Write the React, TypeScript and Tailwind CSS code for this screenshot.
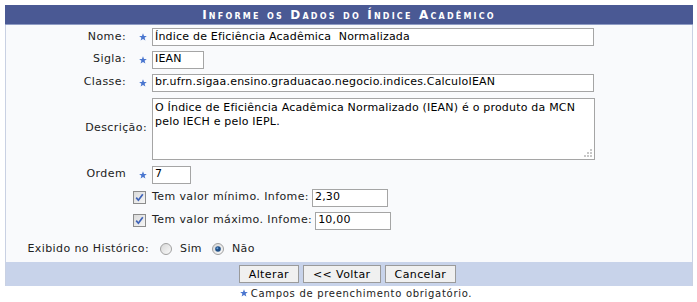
import React from "react";

function Star() {
  return (
    <svg width="8" height="8" viewBox="0 0 10 10" className="inline-block">
      <polygon
        points="5,0.3 6.3,3.6 9.8,3.7 7,5.9 8,9.5 5,7.4 2,9.5 3,5.9 0.2,3.7 3.7,3.6"
        fill="#4a76cf"
      />
    </svg>
  );
}

function Checkbox() {
  return (
    <svg width="13" height="13" viewBox="0 0 13 13" className="block">
      <defs>
        <linearGradient id="cb" x1="0" y1="0" x2="1" y2="1">
          <stop offset="0" stopColor="#d9d9d9" />
          <stop offset="1" stopColor="#f7f7f7" />
        </linearGradient>
      </defs>
      <rect x="0.5" y="0.5" width="12" height="12" fill="url(#cb)" stroke="#8c8c8c" />
      <path d="M3.2 6.6 L5.4 9.2 L9.8 3.2" stroke="#3f63b8" strokeWidth="1.7" fill="none" />
    </svg>
  );
}

function Radio({ on }: { on?: boolean }) {
  return (
    <svg width="12" height="12" viewBox="0 0 12 12" className="block">
      <defs>
        <linearGradient id="rb" x1="0" y1="0" x2="1" y2="1">
          <stop offset="0" stopColor="#d6d6d6" />
          <stop offset="1" stopColor="#fbfbfb" />
        </linearGradient>
      </defs>
      <circle cx="6" cy="6" r="5.5" fill="url(#rb)" stroke="#a0a0a0" />
      {on && <circle cx="6" cy="6" r="2.8" fill="#1f4f86" />}
      {on && <circle cx="5.4" cy="5.3" r="1" fill="#6fa3dd" />}
    </svg>
  );
}

const input =
  "h-[18px] bg-white border border-[#a5a5a5] px-[2px] flex items-center text-black whitespace-nowrap overflow-hidden tracking-[0.2px]";

const button =
  "h-[18px] px-[9px] bg-[#f0f0f0] border border-[#9a9a9a] text-black leading-none tracking-[0.4px]";

export default function App() {
  return (
    <div className="w-[697px] h-[302px] bg-white pt-[5px] text-[11px] tracking-[0.4px] text-[#222] font-['DejaVu_Sans',Verdana,sans-serif]">
      <div className="mx-[5px] w-[688px]">
        <div className="h-[20px] bg-[#4a5994] border-b border-[#8f9cc4] flex items-center justify-center text-white font-bold tracking-[2.2px] [font-variant:small-caps] text-[12px]">
          Informe os Dados do Índice Acadêmico
        </div>

        <div className="bg-[#f9fafc] border-x border-[#c9d1e3]">
          <div className="grid grid-cols-[120px_26px_1fr]">
            {/* Nome */}
            <div className="h-[23px] flex items-center justify-end pt-[1px]">Nome:</div>
            <div className="h-[23px] flex items-center justify-end pr-[5px]"><Star /></div>
            <div className="h-[23px] flex items-center pt-[1px]">
              <div className={`${input} w-[442px]`}>Índice de Eficiência Acadêmica&nbsp; Normalizada</div>
            </div>

            {/* Sigla */}
            <div className="h-[23px] flex items-center justify-end">Sigla:</div>
            <div className="h-[23px] flex items-center justify-end pr-[5px]"><Star /></div>
            <div className="h-[23px] flex items-center">
              <div className={`${input} w-[52px]`}>IEAN</div>
            </div>

            {/* Classe */}
            <div className="h-[23px] flex items-center justify-end">Classe:</div>
            <div className="h-[23px] flex items-center justify-end pr-[5px]"><Star /></div>
            <div className="h-[23px] flex items-center">
              <div className={`${input} w-[442px]`}>br.ufrn.sigaa.ensino.graduacao.negocio.indices.CalculoIEAN</div>
            </div>

            {/* Descrição */}
            <div className="col-span-2 h-[69px] flex items-center justify-end pr-[5px]">Descrição:</div>
            <div className="h-[69px] pt-[4px]">
              <div className="relative w-[443px] h-[62px] bg-white border border-[#a5a5a5] px-[2px] pt-[2px] leading-[14px] text-black tracking-[0.2px]">
                O Índice de Eficiência Acadêmica Normalizado (IEAN) é o produto da MCN
                <br />
                pelo IECH e pelo IEPL.
                <svg width="10" height="10" viewBox="0 0 10 10" className="absolute right-[1px] bottom-[1px]">
                  <rect x="7" y="1" width="2" height="2" fill="#c8c8c8" />
                  <rect x="4" y="4" width="2" height="2" fill="#c8c8c8" />
                  <rect x="7" y="4" width="2" height="2" fill="#c8c8c8" />
                  <rect x="1" y="7" width="2" height="2" fill="#c8c8c8" />
                  <rect x="4" y="7" width="2" height="2" fill="#c8c8c8" />
                  <rect x="7" y="7" width="2" height="2" fill="#c8c8c8" />
                </svg>
              </div>
            </div>

            {/* Ordem */}
            <div className="h-[23px] flex items-center justify-end">Ordem</div>
            <div className="h-[23px] flex items-center justify-end pr-[5px]"><Star /></div>
            <div className="h-[23px] flex items-center">
              <div className={`${input} w-[39px]`}>7</div>
            </div>

            {/* Mínimo */}
            <div className="col-span-2 h-[23px] flex items-center justify-end pr-[6px]"><Checkbox /></div>
            <div className="h-[23px] flex items-center gap-[3px]">
              <span>Tem valor mínimo. Infome:</span>
              <div className={`${input} w-[76px]`}>2,30</div>
            </div>

            {/* Máximo */}
            <div className="col-span-2 h-[23px] flex items-center justify-end pr-[6px]"><Checkbox /></div>
            <div className="h-[23px] flex items-center gap-[3px]">
              <span>Tem valor máximo. Infome:</span>
              <div className={`${input} w-[76px]`}>10,00</div>
            </div>

            {/* Exibido */}
            <div className="col-span-2 h-[30px] pt-[4px] flex items-center justify-end pr-[3px]">Exibido no Histórico:</div>
            <div className="h-[30px] pt-[4px] flex items-center pl-[8px]">
              <Radio />
              <span className="ml-[8px]">Sim</span>
              <span className="ml-[10px]"><Radio on /></span>
              <span className="ml-[8px]">Não</span>
            </div>
          </div>

          <div className="h-[24px] bg-[#c8d3ea] flex items-center justify-center gap-[4px] pr-[3px]">
            <button className={button}>Alterar</button>
            <button className={button}>&lt;&lt; Voltar</button>
            <button className={button}>Cancelar</button>
          </div>
        </div>

        <div className="h-[14px] flex items-center justify-center gap-[3px] pl-[14px] text-[10px] tracking-[0.7px] text-[#222]">
          <Star />
          <span>Campos de preenchimento obrigatório.</span>
        </div>
      </div>
    </div>
  );
}
